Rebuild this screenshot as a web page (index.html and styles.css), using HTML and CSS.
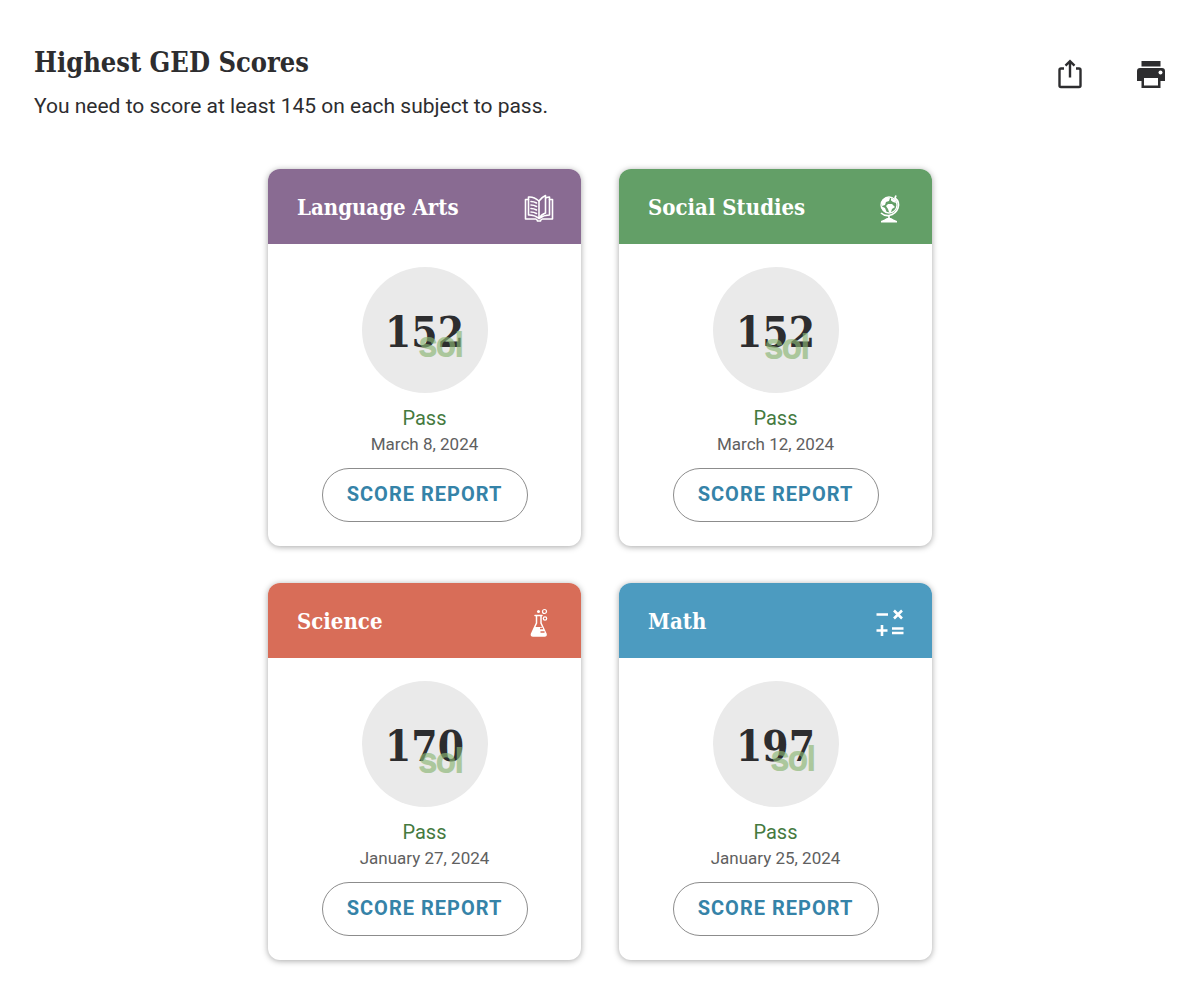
FILE: index.html
```html
<!DOCTYPE html>
<html lang="en">
<head>
  <meta charset="UTF-8">
  <meta name="viewport" content="width=device-width, initial-scale=1.0">
  <title>Highest GED Scores</title>
  <link rel="stylesheet" href="styles.css">
</head>
<body>
  <header class="page-header">
    <div class="page-intro">
      <h1 class="page-title">Highest GED Scores</h1>
      <p class="page-subtitle">You need to score at least 145 on each subject to pass.</p>
    </div>
    <div class="page-actions">
      <button class="icon-btn" type="button" aria-label="Share">
        <svg width="30" height="32" viewBox="0 0 30 32" fill="none" stroke="#2d2d2f" stroke-width="2.4">
          <path d="M9 10.5H6Q4.500 10.500 4.500 12V27.500Q4.500 29 6 29H24Q25.500 29 25.500 27.500V12Q25.500 10.500 24 10.500H21" stroke-linejoin="round"/>
          <path d="M15 19.500V3.500M10.500 7.700 15 3.200 19.500 7.700"/>
        </svg>
      </button>
      <button class="icon-btn" type="button" aria-label="Print">
        <svg width="30" height="32" viewBox="0 0 30 32">
          <path fill="#2d2d2f" d="M5.500 3H24.500V8.500H5.500ZM4 10H26Q29 10 29 13V23H24.500V30H5.500V23H1V13Q1 10 4 10Z"/>
          <path fill="#fff" d="M8 20H22V27.500H8Z"/>
          <circle cx="24.500" cy="14.500" r="2" fill="#fff"/>
        </svg>
      </button>
    </div>
  </header>

  <main class="score-grid">
    <section class="card">
      <div class="card-header language">
        <h2 class="card-title">Language Arts</h2>
        <svg class="card-icon" width="30" height="30" viewBox="0 0 30 30" fill="none" stroke="#fff" stroke-width="1.600" stroke-linejoin="round" stroke-linecap="round">
          <path d="M15 7Q10 2.500 4.500 3V21Q10 20.500 15 24.500V7"/>
          <path d="M15 7Q18 3 21.500 1.500V19Q17 20.500 15 24.500M21.500 4Q24 3 25.500 3V21Q20 21 15 24.500"/>
          <path d="M4.500 5.500H1.500V25H11.500Q13 25 13.500 27H16.500Q17 25 18.500 25H28.500V5.500H25.500"/>
          <path d="M7 7.500Q10 7.500 12.500 9M7 11Q10 11 12.500 12.500M7 14.500Q10 14.500 12.500 16M7 18Q10 18 12.500 19.500"/>
        </svg>
      </div>
      <div class="card-body">
        <div class="score">152<span class="mark mark-language">sol</span></div>
        <div class="status">Pass</div>
        <div class="date">March 8, 2024</div>
        <button class="report-btn" type="button">SCORE REPORT</button>
      </div>
    </section>

    <section class="card">
      <div class="card-header social">
        <h2 class="card-title">Social Studies</h2>
        <svg class="card-icon" width="30" height="30" viewBox="0 0 30 30">
          <circle cx="14" cy="11" r="8" fill="none" stroke="#fff" stroke-width="1.300"/>
          <path fill="#fff" d="M7 6 12 3 15 4 14 7 11 8 10 11 7 12 6.500 9ZM16 4 20 6 21 9 18 8 16 6.500ZM13 10 17 10 20 13 17 15 16 18 14 18 13 15 11 12ZM6 12 10 14 12 19Q7 18 6 12Z"/>
          <path d="M21 1.500 20 4Q25 8 23 14T14 21.500Q9 22 6 19M14 21V25.500" fill="none" stroke="#fff" stroke-width="1.700"/>
          <path fill="#fff" d="M6 28.500V27Q10 25.500 12 24H16Q18 25.500 22 27V28.500Z"/>
        </svg>
      </div>
      <div class="card-body">
        <div class="score">152<span class="mark mark-social">sol</span></div>
        <div class="status">Pass</div>
        <div class="date">March 12, 2024</div>
        <button class="report-btn" type="button">SCORE REPORT</button>
      </div>
    </section>

    <section class="card">
      <div class="card-header science">
        <h2 class="card-title">Science</h2>
        <svg class="card-icon" width="30" height="30" viewBox="0 0 30 30">
          <path d="M11 7.500H18M12.500 8V15L7.500 26Q7 28 9 28H20.500Q22.500 28 22 26L17 15V8" fill="none" stroke="#fff" stroke-width="1.500" stroke-linecap="round"/>
          <path fill="#fff" d="M10.500 19H18.500L22 26.500Q22 28 20.500 28H9Q7 28 7.500 26Z"/>
          <path d="M16 20.500H19M16.500 24H20.500" stroke="#d86d58" stroke-width="1.300"/>
          <circle cx="14.500" cy="3.500" r="1.500" fill="#fff"/>
          <circle cx="20.500" cy="3.500" r="2" fill="none" stroke="#fff" stroke-width="1.200"/>
          <circle cx="21" cy="10.500" r="1.700" fill="none" stroke="#fff" stroke-width="1.200"/>
        </svg>
      </div>
      <div class="card-body">
        <div class="score">170<span class="mark mark-science">sol</span></div>
        <div class="status">Pass</div>
        <div class="date">January 27, 2024</div>
        <button class="report-btn" type="button">SCORE REPORT</button>
      </div>
    </section>

    <section class="card">
      <div class="card-header math">
        <h2 class="card-title">Math</h2>
        <svg class="card-icon" width="30" height="30" viewBox="0 0 30 30" fill="none" stroke="#fff" stroke-width="2.600">
          <path d="M1.500 6.500H13M19 2.500 27 10.500M27 2.500 19 10.500M1.500 22.500H12.500M7 17V28M17 20.500H28.500M17 25H28.500"/>
        </svg>
      </div>
      <div class="card-body">
        <div class="score">197<span class="mark mark-math">sol</span></div>
        <div class="status">Pass</div>
        <div class="date">January 25, 2024</div>
        <button class="report-btn" type="button">SCORE REPORT</button>
      </div>
    </section>
  </main>
</body>
</html>
```
FILE: styles.css
```css
* {
  box-sizing: border-box;
}
body {
  margin: 0;
  padding: 44px 34px 36px;
  font-family: Roboto, sans-serif;
  color: #2d2d2f;
  background: #fff;
}
h1, h2, p {
  margin: 0;
}
.page-header {
  display: flex;
  justify-content: space-between;
  align-items: flex-start;
  margin-bottom: 49px;
}
.page-title {
  font-family: "Roboto Slab", "DejaVu Serif Condensed", "DejaVu Serif", serif;
  font-size: 27px;
  line-height: 38px;
  font-weight: 700;
}
.page-subtitle {
  margin-top: 10px;
  font-size: 21px;
  line-height: 28px;
}
.page-actions {
  display: flex;
  gap: 51px;
  padding-top: 14px;
}
.icon-btn {
  padding: 0;
  border: 0;
  background: none;
  cursor: pointer;
}
.icon-btn svg {
  display: block;
}
.score-grid {
  display: grid;
  grid-template-columns: repeat(auto-fit, minmax(280px, 313px));
  justify-content: center;
  gap: 37px 38px;
  max-width: 700px;
  margin: 0 auto;
}
.card {
  border-radius: 12px;
  background: #fff;
  box-shadow: 0 1px 6px rgba(0, 0, 0, 0.35);
  overflow: hidden;
}
.card-header {
  display: flex;
  align-items: center;
  justify-content: space-between;
  height: 75px;
  padding: 0 27px 0 29px;
  color: #fff;
}
.card-icon {
  margin-top: 4px;
}
.language {
  background: #896b92;
}
.social {
  background: #639f67;
}
.science {
  background: #d86d58;
}
.math {
  background: #4c9bc0;
}
.card-title {
  font-family: "Roboto Slab", "DejaVu Serif Condensed", "DejaVu Serif", serif;
  font-size: 22px;
  line-height: 32px;
  font-weight: 700;
}
.card-body {
  display: flex;
  flex-direction: column;
  align-items: center;
  padding: 23px 20px 24px;
}
.score {
  position: relative;
  display: flex;
  align-items: center;
  justify-content: center;
  width: 126px;
  height: 126px;
  padding-top: 4px;
  border-radius: 50%;
  background: #eaeaea;
  font-family: "Roboto Slab", "DejaVu Serif Condensed", "DejaVu Serif", serif;
  font-size: 42px;
  font-weight: 700;
}
/* marker signature over the score */
.mark {
  position: absolute;
  font-family: "Liberation Sans", sans-serif;
  font-size: 34px;
  line-height: 34px;
  font-weight: 400;
  color: #8ab573;
  -webkit-text-stroke: 2px #8ab573;
  opacity: 0.65;
}
.mark-language {
  left: 58px;
  top: 60px;
}
.mark-social {
  left: 53px;
  top: 62px;
}
.mark-science {
  left: 58px;
  top: 62px;
}
.mark-math {
  left: 59px;
  top: 60px;
}
.status {
  margin-top: 11px;
  font-size: 20px;
  line-height: 28px;
  color: #457a3f;
}
.date {
  font-size: 17px;
  line-height: 24px;
  color: #606060;
}
.report-btn {
  min-width: 206px;
  height: 54px;
  margin-top: 12px;
  padding: 0 24px 2px;
  border: 1px solid #8c8c8c;
  border-radius: 27px;
  background: #fff;
  font-family: inherit;
  font-size: 20px;
  font-weight: 700;
  letter-spacing: 1px;
  color: #3583a8;
  cursor: pointer;
}
```
